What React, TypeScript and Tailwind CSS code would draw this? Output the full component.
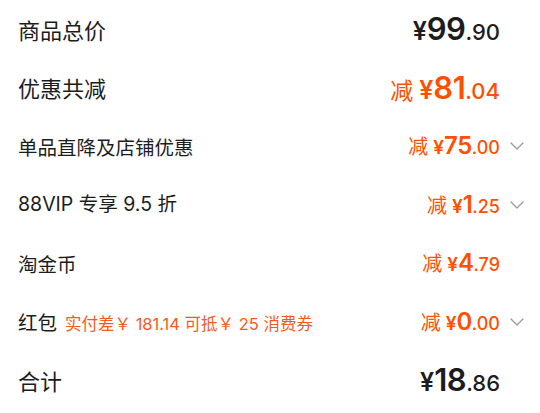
import React from 'react'

const cjk = '"Noto Sans CJK SC", "Noto Sans", sans-serif'
const num = 'Inter, "Noto Sans CJK SC", sans-serif'

function Chevron() {
  return (
    <svg width="14" height="8" viewBox="0 0 14 8" fill="none" className="text-[#9a9a9a]">
      <polyline points="1,1 7,7 13,1" stroke="currentColor" strokeWidth="1.3" strokeLinejoin="round" strokeLinecap="round" />
    </svg>
  )
}

interface Amount {
  minus?: boolean
  int: string
  dec: string
  big?: boolean
  dark?: boolean
}

function Price({ minus, int, dec, big, dark }: Amount) {
  const color = dark ? 'text-[#1c1c1c]' : 'text-[#ff5000]'
  return (
    <div className={`flex items-baseline ${color}`} style={{ fontFamily: num }}>
      {minus && (
        <span className={big ? 'mr-[6px] text-[23px]' : 'mr-[5px] text-[20px]'} style={{ fontFamily: cjk }}>
          减
        </span>
      )}
      <span className={big ? 'text-[25px] font-semibold' : 'text-[19px] font-semibold'}>¥</span>
      <span className={big ? 'text-[31px] font-semibold tracking-[-0.5px]' : 'text-[24px] font-semibold tracking-[-0.5px]'}>{int}</span>
      <span className={big ? 'text-[22px] font-medium' : 'text-[18px] font-medium'}>.{dec}</span>
    </div>
  )
}

interface Row {
  label: string
  note?: string
  labelBig?: boolean
  amount: Amount
  chevron?: boolean
}

const rows: Row[] = [
  { label: '商品总价', labelBig: true, amount: { int: '99', dec: '90', big: true, dark: true } },
  { label: '优惠共减', labelBig: true, amount: { minus: true, int: '81', dec: '04', big: true } },
  { label: '单品直降及店铺优惠', amount: { minus: true, int: '75', dec: '00' }, chevron: true },
  { label: '88VIP 专享 9.5 折', amount: { minus: true, int: '1', dec: '25' }, chevron: true },
  { label: '淘金币', amount: { minus: true, int: '4', dec: '79' } },
  { label: '红包', note: '实付差￥ 181.14 可抵￥ 25 消费券', amount: { minus: true, int: '0', dec: '00' }, chevron: true },
  { label: '合计', labelBig: true, amount: { int: '18', dec: '86', big: true, dark: true } },
]

export default function App() {
  return (
    <div className="h-[413px] w-[540px] overflow-hidden bg-white" style={{ fontFamily: cjk }}>
      {rows.map((r) => (
        <div key={r.label} className="flex h-[58.5px] items-center pl-[18px]">
          <div className="flex flex-1 items-baseline">
            <span
              className={r.labelBig ? 'text-[22px] text-[#1c1c1c]' : 'text-[19.5px] text-[#1c1c1c]'}
              style={{ fontFamily: r.label.startsWith('88') ? num : cjk }}
            >
              {r.label}
            </span>
            {r.note && (
              <span className="ml-[8px] text-[16.5px] text-[#f85a1c]" style={{ fontFamily: num }}>
                {r.note}
              </span>
            )}
          </div>
          <Price {...r.amount} />
          <div className="flex w-[40px] justify-start pl-[10px]">{r.chevron && <Chevron />}</div>
        </div>
      ))}
    </div>
  )
}
